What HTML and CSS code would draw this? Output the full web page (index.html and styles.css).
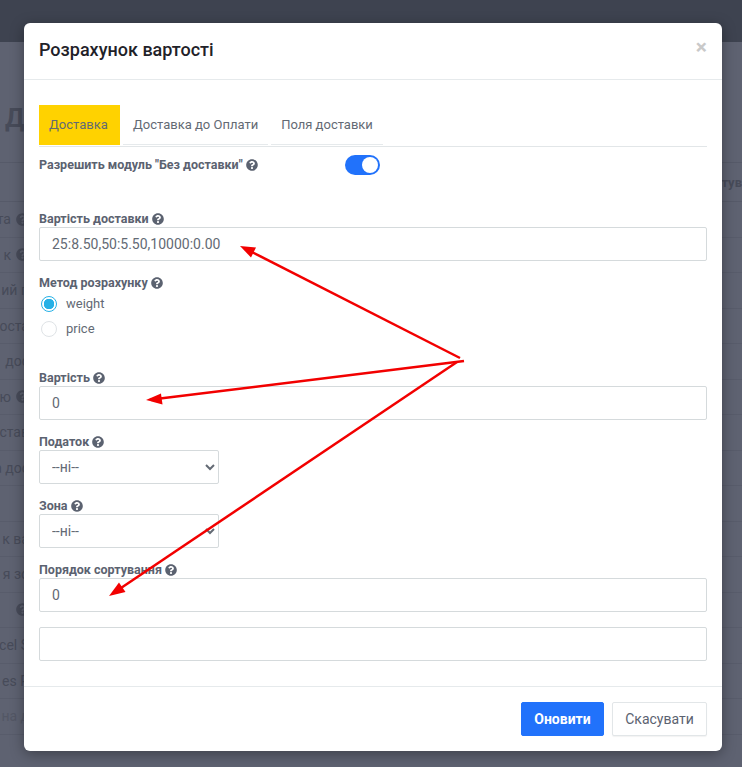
FILE: index.html
```html
<!DOCTYPE html>
<html lang="uk">
<head>
    <meta charset="UTF-8">
    <meta name="viewport" content="width=device-width, initial-scale=1.0">
    <title>Розрахунок вартості</title>
    <link rel="stylesheet" href="styles.css">
</head>
<body>
    <svg class="icon-defs" width="0" height="0">
        <symbol id="help" viewBox="0 0 512 512">
            <path fill="currentColor" d="M504 256c0 136.997-111.043 248-248 248S8 392.997 8 256C8 119.083 119.043 8 256 8s248 111.083 248 248zM262.655 90c-54.497 0-89.255 22.957-116.549 63.758-3.536 5.286-2.353 12.415 2.715 16.258l34.699 26.31c5.205 3.947 12.621 3.008 16.665-2.122 17.864-22.658 30.113-35.797 57.303-35.797 20.429 0 45.698 13.148 45.698 32.958 0 14.976-12.363 22.667-32.534 33.976C247.128 238.528 216 254.941 216 296v4c0 6.627 5.373 12 12 12h56c6.627 0 12-5.373 12-12v-1.333c0-28.462 83.186-29.647 83.186-106.667 0-58.002-60.165-102-116.531-102zM256 338c-25.365 0-46 20.635-46 46 0 25.364 20.635 46 46 46s46-20.636 46-46c0-25.365-20.635-46-46-46z"/>
        </symbol>
    </svg>

    <!-- page behind the dialog -->
    <div class="page">
        <div class="topbar"></div>
        <div class="page-title">Д</div>
        <div class="table-head"><span class="head-sort">ортув</span></div>
        <div class="row"><span class="row-label">та <svg class="help"><use href="#help"/></svg></span></div>
        <div class="row"><span class="row-label">к <svg class="help"><use href="#help"/></svg></span></div>
        <div class="row"><span class="row-label">ий п</span></div>
        <div class="row"><span class="row-label">оста</span></div>
        <div class="row"><span class="row-label">дос</span></div>
        <div class="row"><span class="row-label">ю <svg class="help"><use href="#help"/></svg></span></div>
        <div class="row"><span class="row-label">став</span></div>
        <div class="row"><span class="row-label">а дос</span></div>
        <div class="row"></div>
        <div class="row"><span class="row-label">к ва</span></div>
        <div class="row"><span class="row-label">я зо</span></div>
        <div class="row"><span class="row-label"><svg class="help"><use href="#help"/></svg></span></div>
        <div class="row"><span class="row-label">cel S</span></div>
        <div class="row"><span class="row-label">es P</span></div>
        <div class="row row-off"><span class="row-label">на д</span></div>
    </div>

    <div class="backdrop">
        <div class="modal">
            <div class="modal-header">
                <h4 class="modal-title">Розрахунок вартості</h4>
                <span class="close">×</span>
            </div>
            <div class="modal-body">
                <div class="tabs">
                    <a class="tab active">Доставка</a>
                    <a class="tab">Доставка до Оплати</a>
                    <a class="tab">Поля доставки</a>
                </div>

                <div class="switch-row">
                    <label class="field-label">Разрешить модуль "Без доставки" <svg class="help"><use href="#help"/></svg></label>
                    <span class="switch"><span class="knob"></span></span>
                </div>

                <div class="field">
                    <label class="field-label">Вартість доставки <svg class="help"><use href="#help"/></svg></label>
                    <input class="input" type="text" value="25:8.50,50:5.50,10000:0.00">
                </div>

                <div class="field field-radios">
                    <label class="field-label">Метод розрахунку <svg class="help"><use href="#help"/></svg></label>
                    <div class="radio"><span class="radio-dot checked"></span>weight</div>
                    <div class="radio"><span class="radio-dot"></span>price</div>
                </div>

                <div class="field">
                    <label class="field-label">Вартість <svg class="help"><use href="#help"/></svg></label>
                    <input class="input" type="text" value="0">
                </div>

                <div class="field">
                    <label class="field-label">Податок <svg class="help"><use href="#help"/></svg></label>
                    <select class="input select"><option>--ні--</option></select>
                </div>

                <div class="field">
                    <label class="field-label">Зона <svg class="help"><use href="#help"/></svg></label>
                    <select class="input select"><option>--ні--</option></select>
                </div>

                <div class="field">
                    <label class="field-label">Порядок сортування <svg class="help"><use href="#help"/></svg></label>
                    <input class="input" type="text" value="0">
                </div>

                <input class="input input-last" type="text">
            </div>
            <div class="modal-footer">
                <button class="btn btn-primary">Оновити</button>
                <button class="btn btn-default">Скасувати</button>
            </div>
        </div>
    </div>

    <!-- red arrows drawn on top of the screenshot -->
    <svg class="arrows" viewBox="0 0 742 767">
        <line x1="460" y1="358" x2="250" y2="251"/>
        <polygon points="240,246 256,247.5 251,257.5"/>
        <line x1="464" y1="361" x2="156" y2="399"/>
        <polygon points="146,400 161,393.5 162.500,404.500"/>
        <line x1="457" y1="362" x2="118" y2="590"/>
        <polygon points="109,596 119,582.500 125.500,592"/>
    </svg>
</body>
</html>
```

FILE: styles.css
```css
* {
    margin: 0;
    padding: 0;
    box-sizing: border-box;
}

body {
    position: relative;
    width: 742px;
    height: 767px;
    overflow: hidden;
    background: #5e6271;
    font-family: Roboto, "Noto Sans", sans-serif;
    font-size: 13px;
    color: #5b6270;
}

.icon-defs {
    position: absolute;
}

.help {
    width: 12px;
    height: 12px;
    vertical-align: -1.5px;
}

/* background page */
.topbar {
    height: 42px;
    background: #3e4350;
}

.page-title {
    height: 120px;
    padding: 60px 0 0 5px;
    font-size: 26px;
    font-weight: 700;
    line-height: 32px;
    color: #474b59;
}

.table-head {
    display: flex;
    justify-content: flex-end;
    align-items: center;
    height: 40px;
    border-top: 1px solid #565a69;
    border-bottom: 1px solid #565a69;
    font-weight: 700;
    color: #474b59;
}

.row {
    display: flex;
    align-items: center;
    justify-content: flex-end;
    flex-direction: row-reverse;
    height: 35.5px;
    border-bottom: 1px solid #585c6b;
    font-size: 14px;
    color: #474b59;
}

.row-label {
    display: flex;
    justify-content: flex-end;
    align-items: center;
    gap: 5px;
    width: 29px;
    overflow: hidden;
    white-space: nowrap;
}

.row .help {
    flex: none;
    width: 13px;
    height: 13px;
}

.row-off {
    color: #535765;
}

/* dialog */
.backdrop {
    position: absolute;
    top: 0;
    left: 0;
    width: 100%;
    padding: 23px 20px 0 24px;
}

.modal {
    display: flex;
    flex-direction: column;
    height: 728px;
    background: #fff;
    border-radius: 6px;
    box-shadow: 0 3px 14px rgba(0, 0, 0, .35);
}

.modal-header {
    display: flex;
    justify-content: space-between;
    align-items: flex-start;
    height: 57px;
    padding: 15px 15px 0;
    border-bottom: 1px solid #e6eaec;
}

.modal-title {
    font-size: 18px;
    font-weight: 500;
    line-height: 24px;
    color: #1f2229;
}

.close {
    font-size: 21px;
    font-weight: 700;
    line-height: 18px;
    color: #c9c9c9;
}

.modal-body {
    flex: 1;
    padding: 25px 15px 0;
}

.tabs {
    display: flex;
    height: 42px;
    border-bottom: 1px solid #e2e6e8;
}

.tab {
    height: 40px;
    margin-right: 3px;
    padding: 0 10px;
    border-bottom: 1px solid #e6eaec;
    line-height: 39px;
    color: #636a74;
}

.tab.active {
    width: 81px;
    background: #ffd200;
    border-bottom-color: #ffd200;
    margin-right: 3px;
}

.field-label {
    display: block;
    height: 16px;
    font-size: 12.5px;
    font-weight: 700;
    line-height: 16px;
    color: #5b6270;
}

.switch-row {
    display: flex;
    height: 64px;
    padding-top: 8px;
}

.switch-row .field-label {
    width: 306px;
    line-height: 20px;
}

.switch {
    display: flex;
    justify-content: flex-end;
    align-items: center;
    width: 35px;
    height: 20px;
    padding-right: 2px;
    background: #2172fb;
    border-radius: 10px;
}

.knob {
    width: 16px;
    height: 16px;
    background: #fff;
    border-radius: 50%;
}

.field {
    margin-bottom: 14px;
}

.field-radios {
    height: 95px;
    margin-bottom: 0;
}

.radio {
    display: flex;
    align-items: center;
    height: 25px;
    padding-left: 2px;
    gap: 9px;
    color: #636a74;
}

.radio-dot {
    width: 16px;
    height: 16px;
    border: 1px solid #dfe3e6;
    border-radius: 50%;
}

.radio-dot.checked {
    border-color: #27b1e6;
    background: radial-gradient(circle, #27b1e6 0 5px, #fff 5.5px);
}

.input {
    display: block;
    width: 100%;
    height: 34px;
    padding: 0 12px;
    background: #fff;
    border: 1px solid #d5dadc;
    border-radius: 2px;
    font-family: inherit;
    font-size: 14px;
    color: #636a74;
    outline: none;
}

.select {
    width: 180px;
    padding: 0 8px;
}

.input-last {
    margin-top: 15px;
}

.modal-footer {
    display: flex;
    justify-content: flex-end;
    gap: 8px;
    height: 65px;
    padding: 15px 15px 0;
    border-top: 1px solid #e6eaec;
}

.btn {
    height: 34px;
    border-radius: 2px;
    font-family: inherit;
    font-size: 14px;
}

.btn-primary {
    width: 83px;
    background: #2172fb;
    border: 1px solid #2172fb;
    font-weight: 700;
    color: #fff;
}

.btn-default {
    width: 95px;
    background: #fff;
    border: 1px solid #e2e6e8;
    box-shadow: 0 1px 1px rgba(0, 0, 0, .05);
    color: #5b6270;
}

/* arrows */
.arrows {
    position: absolute;
    top: 0;
    left: 0;
    width: 742px;
    height: 767px;
    pointer-events: none;
}

.arrows line {
    stroke: #f20000;
    stroke-width: 2.5;
}

.arrows polygon {
    fill: #f20000;
}
```
